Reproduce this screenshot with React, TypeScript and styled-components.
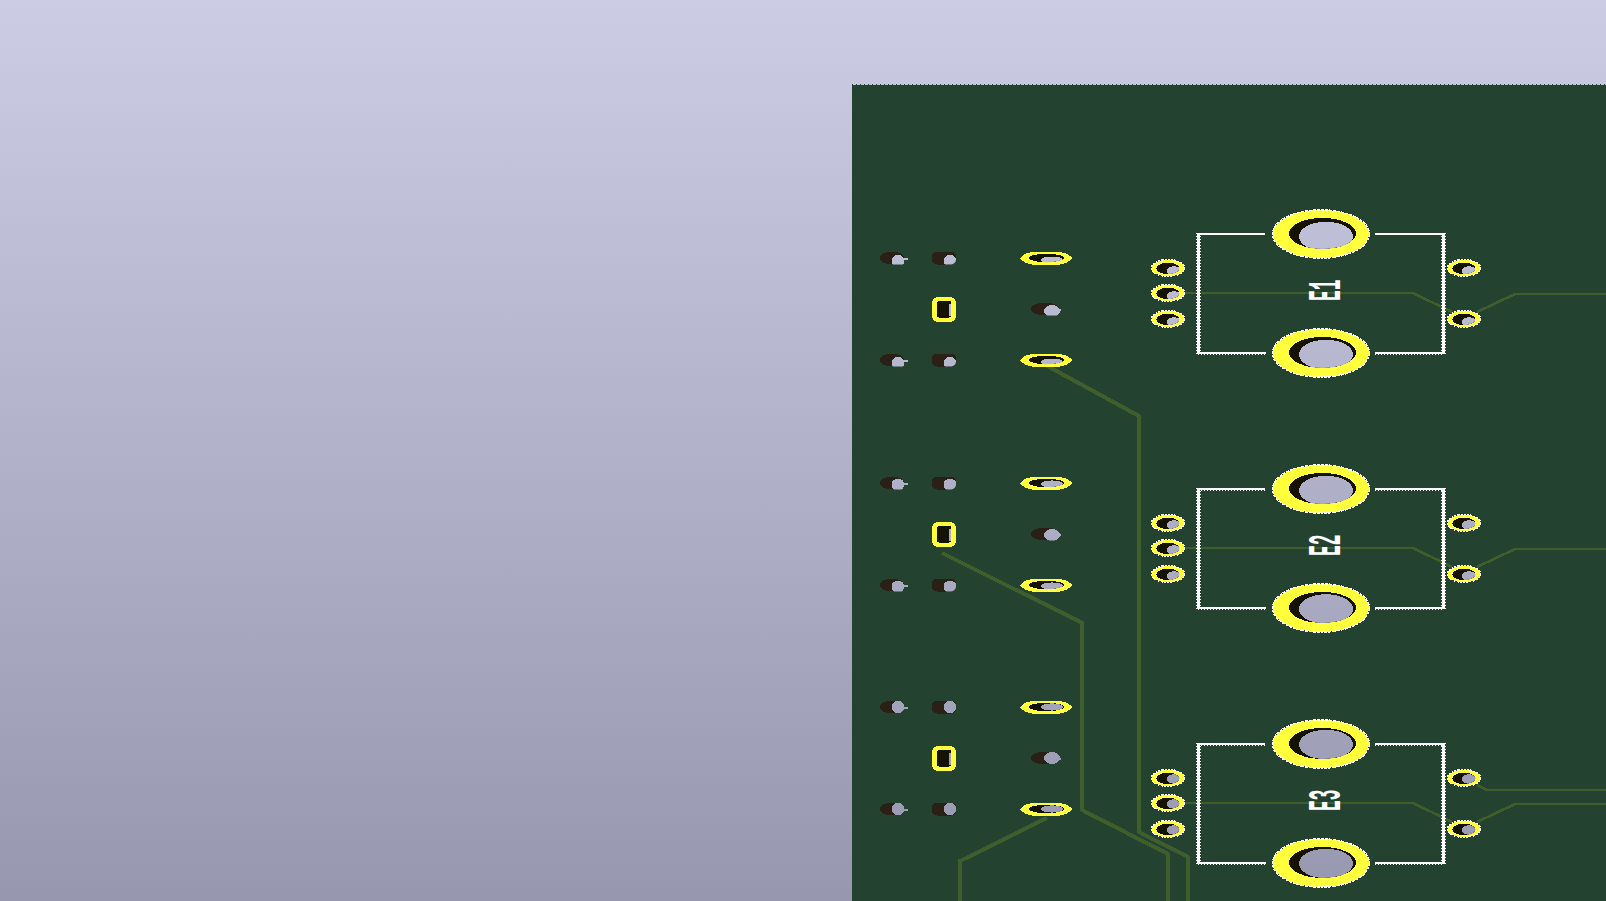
import React from 'react';
import styled, { createGlobalStyle } from 'styled-components';

const Global = createGlobalStyle`
  html, body { margin: 0; padding: 0; height: 100%; overflow: hidden; }
  #root { height: 100%; }
`;

const BG_TOP = '#cccde5';
const BG_BOTTOM = '#9798b0';
const BOARD = '#244230';
const YELLOW = '#ffff3c';
const DARK = '#161200';
const BROWN = '#2a2016';
const TRACE = '#3f5e2c';

const Viewport = styled.main`
  width: 1606px;
  height: 901px;
  box-sizing: border-box;
  padding: 84px 0 0 852px;
  background: linear-gradient(to bottom, ${BG_TOP} 0%, ${BG_BOTTOM} 100%);
`;

const Board = styled.section`
  width: 754px;
  height: 817px;
  background:
    repeating-linear-gradient(to right, ${BOARD} 0 1px, transparent 1px 4px) 0 0 / 100% 1px no-repeat,
    linear-gradient(${BOARD}, ${BOARD}) 0 1px / 100% 100% no-repeat;
`;

const Artwork = styled.svg`
  display: block;
  width: 754px;
  height: 817px;
`;

const SilkLabel = styled.text`
  font-family: 'Liberation Mono', monospace;
  font-size: 47px;
  font-weight: 700;
  fill: #fff;
`;

const W = (x: number) => x - 852;
const H = (y: number) => y - 84;

type Pt = [number, number];
const poly = (pts: Pt[]) => pts.map(([x, y]) => `${W(x)},${H(y)}`).join(' ');

const Trace = ({ pts, w = 4 }: { pts: Pt[]; w?: number }) => (
  <polyline points={poly(pts)} fill="none" stroke={TRACE} strokeWidth={w} shapeRendering="crispEdges" />
);

const Silk = ({ pts, jag }: { pts: Pt[]; jag?: boolean }) => (
  <g fill="none" stroke="#fff" shapeRendering="crispEdges">
    <polyline points={poly(pts)} strokeWidth={2} />
    {jag && <polyline points={poly(pts)} strokeWidth={3} strokeDasharray="1 2" />}
  </g>
);

const SilkSide = ({ x, y1, y2 }: { x: number; y1: number; y2: number }) => (
  <g fill="none" stroke="#fff" shapeRendering="crispEdges">
    <line x1={W(x)} y1={H(y1)} x2={W(x)} y2={H(y2)} strokeWidth={3} />
    <line x1={W(x)} y1={H(y1)} x2={W(x)} y2={H(y2)} strokeWidth={5} strokeDasharray="1 2" />
  </g>
);

const BigPad = ({ cx, cy, shift }: { cx: number; cy: number; shift: number }) => {
  const id = `big-${cx}-${cy}`;
  const dark = { cx: W(cx + 1.5), cy: H(cy - 0.5), rx: 33.5, ry: 15.5 };
  return (
    <g shapeRendering="crispEdges">
      <ellipse cx={W(cx)} cy={H(cy)} rx={48} ry={24} fill={YELLOW} />
      <ellipse cx={W(cx)} cy={H(cy)} rx={48.5} ry={24.2} fill="none" stroke="#fff" strokeWidth={1.4} strokeDasharray="3 1" />
      <clipPath id={id}>
        <ellipse {...dark} />
      </clipPath>
      <ellipse {...dark} fill={DARK} />
      <ellipse cx={W(cx + 5)} cy={H(cy + 0.5 + shift)} rx={27} ry={14.8} fill="url(#hole)" clipPath={`url(#${id})`} />
    </g>
  );
};

const SmallPad = ({ cx, cy, shift, lx = 6 }: { cx: number; cy: number; shift: number; lx?: number }) => {
  const id = `small-${cx}-${cy}`;
  const dark = { cx: W(cx), cy: H(cy + 0.5), rx: 11.5, ry: 5.8 };
  return (
    <g shapeRendering="crispEdges">
      <ellipse cx={W(cx)} cy={H(cy)} rx={16.4} ry={8.2} fill={YELLOW} />
      <ellipse cx={W(cx)} cy={H(cy)} rx={16.8} ry={8.5} fill="none" stroke="#fff" strokeWidth={1.3} strokeDasharray="2 1.2" />
      <clipPath id={id}>
        <ellipse {...dark} />
      </clipPath>
      <ellipse {...dark} fill={DARK} />
      <ellipse cx={W(cx + lx)} cy={H(cy + 0.5 + shift)} rx={7} ry={4.8} fill="url(#hole)" clipPath={`url(#${id})`} />
    </g>
  );
};

const Footprint = ({
  dy,
  label,
  topShift,
  bottomShift,
  smallShift,
  solidTop,
  third,
}: {
  dy: number;
  label: string;
  topShift: number;
  bottomShift: number;
  smallShift: number;
  solidTop?: boolean;
  third?: boolean;
}) => (
  <g>
    <Trace pts={[[1185, 293 + dy], [1413, 293 + dy], [1452, 312 + dy]]} w={2.6} />
    <Trace pts={[[1477, 312 + dy], [1515, 294 + dy], [1606, 294 + dy]]} w={2.6} />
    {third && <Trace pts={[[1477, 785], [1487, 790], [1606, 790]]} w={2.6} />}
    <Silk pts={[[1198, 234 + dy], [1265, 234 + dy]]} jag={!solidTop} />
    <Silk pts={[[1375, 234 + dy], [1444, 234 + dy]]} jag={!solidTop} />
    <Silk pts={[[1198, 353 + dy], [1266, 353 + dy]]} jag />
    <Silk pts={[[1375, 353 + dy], [1444, 353 + dy]]} jag />
    <SilkSide x={1198} y1={233 + dy} y2={354 + dy} />
    <SilkSide x={1443} y1={233 + dy} y2={354 + dy} />
    <BigPad cx={1321} cy={234 + dy} shift={topShift} />
    <BigPad cx={1321} cy={353 + dy} shift={bottomShift} />
    <SmallPad cx={1168} cy={268 + dy} shift={smallShift} />
    <SmallPad cx={1168} cy={293 + dy} shift={smallShift} />
    <SmallPad cx={1168} cy={319 + dy} shift={smallShift} />
    <SmallPad cx={1464} cy={268 + dy} shift={smallShift} lx={5} />
    <SmallPad cx={1464} cy={319 + dy} shift={smallShift} lx={5} />
    <SilkLabel transform={`translate(${W(1340)} ${H(301 + dy)}) rotate(-90) scale(0.38 1)`}>{label}</SilkLabel>
  </g>
);

const Socket = ({ cx, cy, shift, wide }: { cx: number; cy: number; shift: number; wide?: boolean }) => {
  const id = `socket-${cx}-${cy}`;
  const halfW = wide ? 14 : 12;
  return (
    <g shapeRendering="crispEdges">
      <clipPath id={id}>
        <rect x={W(cx - 20)} y={H(cy - 7)} width={50} height={13.5} />
      </clipPath>
      <ellipse cx={W(cx - 1)} cy={H(cy)} rx={halfW} ry={6.5} fill={BROWN} />
      <ellipse cx={W(cx + (wide ? 6 : 5))} cy={H(cy + shift)} rx={wide ? 8 : 6.5} ry={6} fill="url(#hole)" clipPath={`url(#${id})`} />
      <rect x={W(cx + 10)} y={H(cy)} width={5} height={1.6} fill="url(#hole)" />
    </g>
  );
};

const RoundSocket = ({ cx, cy, shift }: { cx: number; cy: number; shift: number }) => {
  const id = `round-${cx}-${cy}`;
  return (
    <g shapeRendering="crispEdges">
      <clipPath id={id}>
        <rect x={W(cx - 12)} y={H(cy - 6.5)} width={24} height={13} rx={5} />
      </clipPath>
      <rect x={W(cx - 12)} y={H(cy - 6.5)} width={24} height={13} rx={5} fill={BROWN} />
      <ellipse cx={W(cx + 6)} cy={H(cy + shift)} rx={6.5} ry={6} fill="url(#hole)" clipPath={`url(#${id})`} />
    </g>
  );
};

const Slot = ({ cx, cy, shift }: { cx: number; cy: number; shift: number }) => {
  const id = `slot-${cx}-${cy}`;
  const outline: Pt[] = [
    [cx - 26, cy],
    [cx - 24, cy - 2],
    [cx - 20, cy - 4.5],
    [cx - 14, cy - 6],
    [cx + 14, cy - 6],
    [cx + 20, cy - 4.5],
    [cx + 24, cy - 2],
    [cx + 26, cy],
    [cx + 24, cy + 2.5],
    [cx + 20, cy + 5],
    [cx + 14, cy + 6.5],
    [cx - 14, cy + 6.5],
    [cx - 20, cy + 5],
    [cx - 24, cy + 2.5],
  ];
  const dark = { cx: W(cx + 0.5), cy: H(cy), rx: 17.5, ry: 4.2 };
  return (
    <g shapeRendering="crispEdges">
      <polygon points={poly(outline)} fill={YELLOW} />
      <clipPath id={id}>
        <ellipse {...dark} />
      </clipPath>
      <ellipse {...dark} fill={DARK} />
      <ellipse cx={W(cx + 6)} cy={H(cy + shift)} rx={11} ry={3.6} fill="url(#hole)" clipPath={`url(#${id})`} />
    </g>
  );
};

const Square = ({ cx, cy }: { cx: number; cy: number }) => (
  <g shapeRendering="crispEdges">
    <rect x={W(cx - 12)} y={H(cy - 12)} width={24} height={25} rx={6} fill={YELLOW} />
    <rect x={W(cx - 7)} y={H(cy - 8)} width={14} height={16.5} rx={2} fill={DARK} />
    <rect x={W(cx + 5)} y={H(cy - 5)} width={2} height={12} fill="url(#hole)" />
  </g>
);

const SwitchGroup = ({ y, shift }: { y: number; shift: number }) => (
  <g>
    <Socket cx={893} cy={y} shift={shift} />
    <RoundSocket cx={944} cy={y} shift={shift} />
    <Slot cx={1046} cy={y} shift={shift * 0.7} />
    <Square cx={944} cy={y + 51} />
    <Socket cx={1046} cy={y + 51} shift={shift * 0.7} wide />
    <Socket cx={893} cy={y + 102} shift={shift} />
    <RoundSocket cx={944} cy={y + 102} shift={shift} />
    <Slot cx={1046} cy={y + 102} shift={shift * 0.7} />
  </g>
);

export default function App() {
  return (
    <>
      <Global />
      <Viewport>
        <Board>
          <Artwork viewBox="0 0 754 817">
            <defs>
              <linearGradient id="hole" gradientUnits="userSpaceOnUse" x1="0" y1={-84} x2="0" y2={817}>
                <stop offset="0" stopColor={BG_TOP} />
                <stop offset="1" stopColor={BG_BOTTOM} />
              </linearGradient>
            </defs>
            <Trace pts={[[1040, 362], [1139, 416], [1139, 832], [1188, 857], [1188, 901]]} />
            <Trace pts={[[942, 553], [1082, 623], [1082, 810], [1168, 854], [1168, 901]]} />
            <Trace pts={[[1047, 818], [960, 861], [960, 901]]} />
            <SwitchGroup y={258} shift={3} />
            <SwitchGroup y={483} shift={1.5} />
            <SwitchGroup y={707} shift={0} />
            <Footprint dy={0} label="E1" topShift={2} bottomShift={1} smallShift={2.5} solidTop />
            <Footprint dy={255} label="E2" topShift={1} bottomShift={0.5} smallShift={1.5} />
            <Footprint dy={510} label="E3" topShift={0} bottomShift={0} smallShift={0.5} third />
          </Artwork>
        </Board>
      </Viewport>
    </>
  );
}
